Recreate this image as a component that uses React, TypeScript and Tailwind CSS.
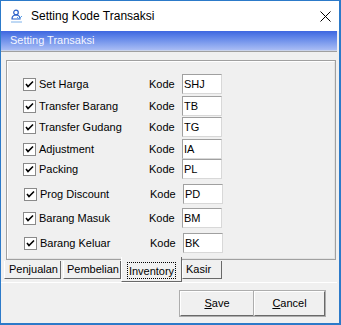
import React from "react";

const rows = [
  { label: "Set Harga", code: "SHJ", mt: "mt-[12px]", cx: "ml-[15px]", lx: "ml-[3px]" },
  { label: "Transfer Barang", code: "TB", mt: "mt-[2px]", cx: "ml-[15px]", lx: "ml-[3px]" },
  { label: "Transfer Gudang", code: "TG", mt: "mt-[1px]", cx: "ml-[15px]", lx: "ml-[3px]" },
  { label: "Adjustment", code: "IA", mt: "mt-[2px]", cx: "ml-[15px]", lx: "ml-[3px]" },
  { label: "Packing", code: "PL", mt: "mt-[0px]", cx: "ml-[15px]", lx: "ml-[3px]" },
  { label: "Prog Discount", code: "PD", mt: "mt-[5px]", cx: "ml-[16px]", lx: "ml-[3px]" },
  { label: "Barang Masuk", code: "BM", mt: "mt-[4px]", cx: "ml-[15px]", lx: "ml-[3px]" },
  { label: "Barang Keluar", code: "BK", mt: "mt-[5px]", cx: "ml-[16px]", lx: "ml-[3px]" },
];

function Check() {
  return (
    <div className="w-[13px] h-[13px] bg-white border border-[#8a8a8a] flex items-center justify-center shrink-0">
      <svg width="9" height="9" viewBox="0 0 9 9">
        <path d="M1 4 L3 6.5 L8 1.5" stroke="#000" strokeWidth="1.6" fill="none" />
      </svg>
    </div>
  );
}

export default function App() {
  return (
    <div
      className="w-[341px] h-[325px] bg-[#f0f0f0] border-t border-l border-r-2 border-b-2 border-[#2c7ac9] flex flex-col text-[11px] text-black overflow-hidden"
      style={{ fontFamily: '"Liberation Sans", Arial, sans-serif' }}
    >
      {/* title bar */}
      <div className="h-[30px] bg-white flex items-center shrink-0 relative">
        <svg className="ml-[9px]" width="14" height="14" viewBox="0 0 14 14">
          <circle cx="6" cy="3.5" r="2.3" fill="none" stroke="#2a5fc8" strokeWidth="1.2" />
          <path d="M2 10 C2 7 4 6 6 6 C8 6 10 7 10 10 Z" fill="none" stroke="#2a5fc8" strokeWidth="1.2" />
          <path d="M7 8 L9 10 L12 7" fill="none" stroke="#5aa0e8" strokeWidth="1" />
          <path d="M1 13 L12 13" stroke="#7fb2ea" strokeWidth="1" />
        </svg>
        <span className="ml-[7px] text-[12px] text-black">Setting Kode Transaksi</span>
        <svg className="absolute left-[319px] top-[10px]" width="11" height="11" viewBox="0 0 11 11">
          <path d="M0.5 0.5 L10.5 10.5 M10.5 0.5 L0.5 10.5" stroke="#000" strokeWidth="1" />
        </svg>
      </div>
      {/* header */}
      <div className="h-[20px] mr-[2px] bg-gradient-to-b from-[#3d66e0] to-[#a9bcf4] flex items-center pl-[9px] shrink-0 border-b border-[#c9d3ec]">
        <span className="text-[#f4f6ff]">Setting Transaksi</span>
      </div>
      <div className="h-[1px] bg-[#a0a0a0] mr-[2px] shrink-0" />
      {/* page control */}
      <div className="ml-[5px] w-[330px] mt-[8px] flex flex-col shrink-0">
        <div className="h-[200px] border border-[#a0a0a0]">
          <div className="h-full border-t border-l border-white border-r border-b border-r-[#e3e3e3] border-b-[#e3e3e3] flex flex-col">
            {rows.map((r) => (
              <div key={r.label} className={`${r.mt} h-[20px] flex items-center shrink-0`}>
                <div className={r.cx}>
                  <Check />
                </div>
                <span className={`${r.lx} w-[110px] whitespace-nowrap`}>{r.label}</span>
                <span className="w-[33px]">Kode</span>
                <div className="w-[40px] h-[20px] bg-white border border-t-[#a0a0a0] border-l-[#a0a0a0] border-r-[#d8d8d8] border-b-[#d8d8d8] flex items-center pl-[1px]">
                  {r.code}
                </div>
              </div>
            ))}
          </div>
        </div>
        {/* tabs */}
        <div className="flex items-start h-[22px] -ml-[2px]">
          <div className="mt-[1px] h-[18px] w-[57px] flex items-center pl-[4px] border-l border-white border-r border-r-[#696969] border-b border-b-[#696969]">
            Penjualan
          </div>
          <div className="mt-[1px] ml-[2px] h-[18px] w-[58px] flex items-center pl-[3px] border-l border-white border-r border-r-[#696969] border-b border-b-[#696969]">
            Pembelian
          </div>
          <div className="-mt-[3px] h-[25px] w-[61px] flex items-end justify-center pb-[2px] border-l border-white border-r border-r-[#696969] border-b border-b-[#696969] bg-[#f0f0f0] relative">
            <span className="border border-dotted border-black px-[1px] leading-[14px] pt-[1px]">Inventory</span>
          </div>
          <div className="mt-[1px] h-[18px] w-[40px] flex items-center pl-[3px] border-l border-white border-r border-r-[#696969] border-b border-b-[#696969]">
            Kasir
          </div>
        </div>
      </div>
      <div className="h-[1px] bg-white mr-[2px] shrink-0" />
      {/* buttons */}
      <div className="flex mt-[8px] ml-[179px]">
        <div className="w-[74px] h-[25px] flex items-center justify-center border border-t-white border-l-white border-r-[#696969] border-b-[#696969] outline outline-1 outline-[#adadad]">
          <span><span className="underline">S</span>ave</span>
        </div>
        <div className="w-[71px] h-[25px] flex items-center justify-center border border-t-white border-l-white border-r-[#696969] border-b-[#696969] outline outline-1 outline-[#adadad]">
          <span><span className="underline">C</span>ancel</span>
        </div>
      </div>
    </div>
  );
}
